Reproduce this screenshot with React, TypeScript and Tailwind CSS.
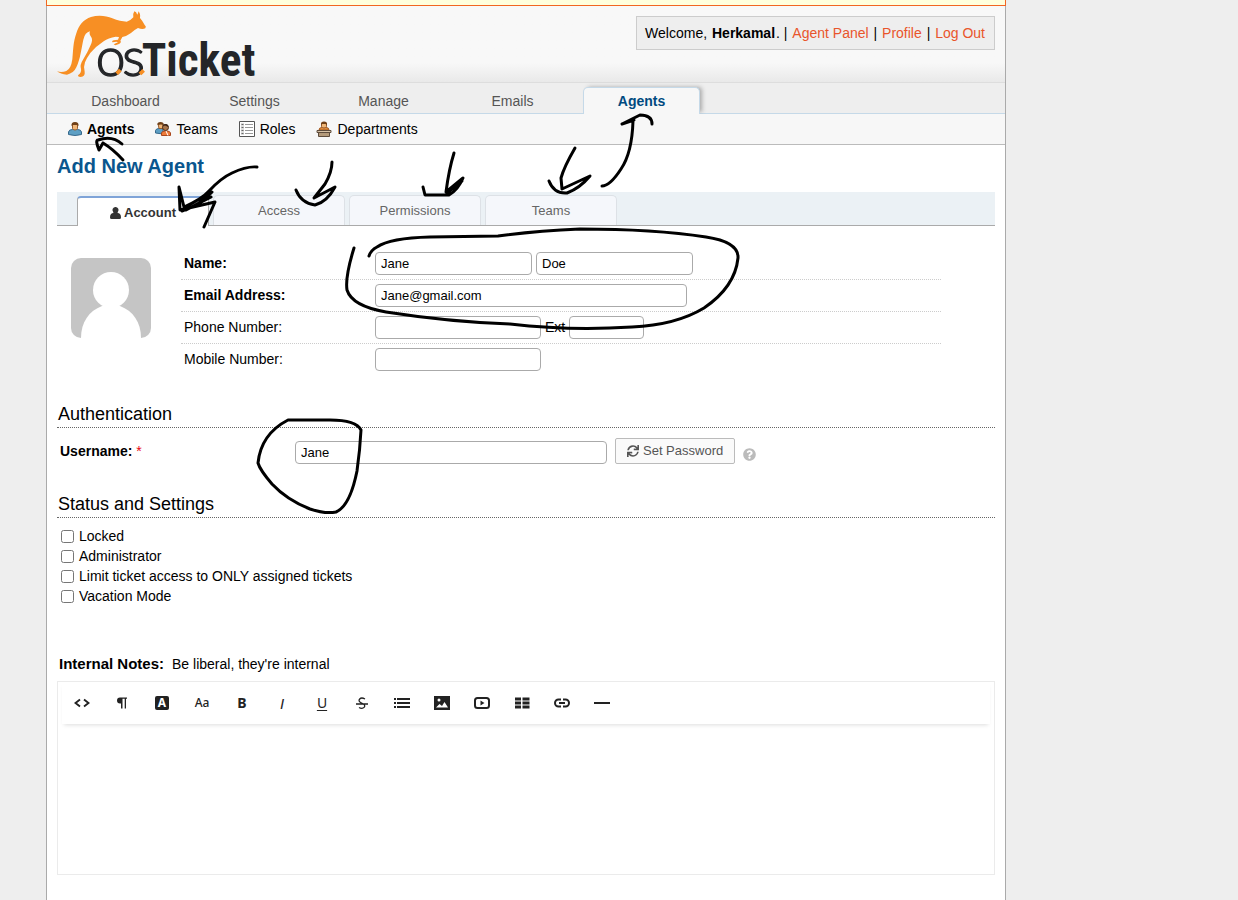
import React from "react";
import { FaSync, FaQuestionCircle } from "react-icons/fa";

function Logo() {
  return (
    <svg viewBox="45 30 600 222" className="h-[74px] w-[200px] overflow-visible" role="img" aria-label="osTicket">
      <path
        fill="#f78f24"
        d="M48 214 Q62 218 76 213 Q90 207 94 178 C97 150 96 128 106 100 C113 76 128 58 150 51 C172 44 196 47 214 55 Q238 65 257 65 Q270 61 277 52 Q275 41 280 34 Q286 35 289 44 Q293 36 292 34 Q299 40 297 54 Q305 63 311 75 Q317 79 313 85 Q304 90 291 84 Q279 90 270 99 Q258 108 244 111 L238 122 Q243 127 232 133 Q222 138 218 133 L231 127 Q229 124 214 127 Q211 123 218 121 L231 119 L234 111 L224 110 Q202 113 188 124 Q165 139 148 159 Q137 174 132 187 Q127 200 131 215 Q133 229 119 231 Q108 230 112 225 Q122 218 120 206 Q116 194 126 179 Q140 157 149 135 Q156 121 151 112 Q143 101 147 94 Q132 97 127 119 C121 146 118 177 106 202 Q98 220 78 224 Q58 223 48 214 Z"
      />
      <text x="164" y="227" fill="#242629" stroke="#242629" strokeWidth="4" fontSize="160" fontWeight="300" fontFamily="Lato, sans-serif">
        o<tspan x="244">s</tspan>
      </text>
      <text x="302" y="227" fill="#242629" fontSize="136" fontWeight="700" fontFamily="'Roboto Condensed', Lato, sans-serif">Ticket</text>
      <path d="M227 221 L238 210 M297 222 L308 211" stroke="#f78f24" strokeWidth="11" />
    </svg>
  );
}

function AgentIcon() {
  return (
    <svg viewBox="0 0 16 16" className="size-4">
      <path d="M1.500 13.500V11Q2 8.500 5.500 8.500H10.500Q14 8.500 14.500 11V13.500Q8 15.500 1.500 13.500Z" fill="#5d9fc4" stroke="#37698c" />
      <path d="M5.500 3h5v4.500Q10 9 8 9T5.500 7.500Z" fill="#f0b778" stroke="#965a2c" />
      <path d="M4.500 5Q4 1 8 1t3.500 4L10 4H6Z" fill="#704017" />
    </svg>
  );
}

function TeamsIcon() {
  return (
    <svg viewBox="0 0 16 16" className="size-4">
      <path d="M.5 12V9.500Q1 7.500 4 7.500h4V13Z" fill="#5d9fc4" stroke="#37698c" />
      <path d="M3 2.500h5v5H4Z" fill="#f0b778" stroke="#965a2c" />
      <path d="M2.500 4Q2 1 5.500 1T8.500 4L6 3.500Z" fill="#704017" />
      <path d="M6.500 14.500V12Q7 10 10 10h2q3 0 3.500 2v2.500Z" fill="#ed7b3a" stroke="#a8461d" />
      <path d="M11 10l2 4.500" stroke="#fff" />
      <circle cx="10.500" cy="6.500" r="3" fill="#a9764b" stroke="#4e2c17" />
      <path d="M7.500 5Q8 3 10.500 3t3 3L10 4.500Z" fill="#3c2416" />
    </svg>
  );
}

function RolesIcon() {
  return (
    <svg viewBox="0 0 16 16" className="size-4">
      <path d="M.5.5h15v15H.5Z" fill="#fff" stroke="#555" />
      <path d="M2 2h3v12H2Z" fill="#ddd" />
      <path d="M2.500 3.500h2M2.500 6.500h2M2.500 9.500h2M2.500 12.500h2" stroke="#666" />
      <path d="M6 3.500h8M6 6.500h8M6 9.500h8M6 12.500h8" stroke="#999" />
    </svg>
  );
}

function DepartmentsIcon() {
  return (
    <svg viewBox="0 0 16 16" className="size-4">
      <path d="M3 9Q3 6.500 6 6.500h4Q13 6.500 13 9Z" fill="#e8913e" stroke="#a0561e" />
      <path d="M5.500 2h5v3.500Q10 7 8 7T5.500 5.500Z" fill="#f0b778" stroke="#965a2c" />
      <path d="M5 4Q4.500.5 8 .5T11 4L9.500 3H6Z" fill="#704017" />
      <path d="M1 9.500h14v2H1Z" fill="#d7c3a7" stroke="#5e4c3c" />
      <path d="M2.500 11.500h11v4h-11Z" fill="#b49a7a" stroke="#5e4c3c" />
    </svg>
  );
}

const mainTabs = ["Dashboard", "Settings", "Manage", "Emails", "Agents"];

const subTabs = [
  { name: "Agents", icon: <AgentIcon />, active: true },
  { name: "Teams", icon: <TeamsIcon />, active: false },
  { name: "Roles", icon: <RolesIcon />, active: false },
  { name: "Departments", icon: <DepartmentsIcon />, active: false },
];

const options = ["Locked", "Administrator", "Limit ticket access to ONLY assigned tickets", "Vacation Mode"];

const glyph = "font-['Noto_Sans',sans-serif] text-sm leading-none";

const tools: { label: string; icon: React.ReactNode }[] = [
  { label: "HTML", icon: <svg viewBox="0 0 16 16" className="size-4"><path d="M6 4.500 1.500 8 6 11.500M10 4.500 14.500 8 10 11.500" fill="none" stroke="currentColor" strokeWidth="1.900" /></svg> },
  { label: "Format", icon: <svg viewBox="0 0 16 16" className="size-4"><path d="M7 8.500H6a3 3 0 0 1 0-6H13V3.700h-1V13.500h-1.300V3.700H8.500V13.500H7Z" fill="currentColor" /></svg> },
  { label: "Text color", icon: <span className="flex size-3.5 items-center justify-center rounded-xs bg-[#222] font-['Noto_Sans',sans-serif] text-xs leading-none font-bold text-white">A</span> },
  { label: "Font", icon: <span className="font-['Noto_Sans',sans-serif] text-xs leading-none font-medium">Aa</span> },
  { label: "Bold", icon: <span className={glyph + " font-bold"}>B</span> },
  { label: "Italic", icon: <span className="text-[15px] leading-none italic">I</span> },
  { label: "Underline", icon: <span className={glyph + " underline underline-offset-2"}>U</span> },
  { label: "Deleted", icon: <svg viewBox="0 0 16 16" className="size-4"><path d="M11 4Q7.500 2 5.700 4T7 7.700L9.500 9Q12 11 9.500 12.800 7.500 14 5 12.500M2 9h12" fill="none" stroke="currentColor" strokeWidth="1.300" /></svg> },
  { label: "Lists", icon: <svg viewBox="0 0 16 16" className="size-4"><path d="M0 4h2M3 4h13M0 8h2M3 8h13M0 12h2M3 12h13" stroke="currentColor" strokeWidth="2" /></svg> },
  { label: "Image", icon: <svg viewBox="0 0 16 16" className="size-4"><path fillRule="evenodd" d="M0 1h16v14H0ZM3.500 5a1.500 1.500 0 1 0 3 0 1.500 1.500 0 1 0-3 0M2 12.500h12L10.500 7 8 11 5.500 9Z" fill="currentColor" /></svg> },
  { label: "Video", icon: <svg viewBox="0 0 16 16" className="size-4"><rect x="1" y="3" width="14" height="10" rx="2.500" fill="none" stroke="currentColor" strokeWidth="2" /><path d="M6.500 5.500 10.500 8l-4 2.500Z" fill="currentColor" /></svg> },
  { label: "Table", icon: <svg viewBox="0 0 16 16" className="size-4"><path d="M1 4h6M8.500 4h7M1 8h6M8.500 8h7M1 12h6M8.500 12h7" stroke="currentColor" strokeWidth="3" /></svg> },
  { label: "Link", icon: <svg viewBox="0 0 16 16" className="size-4"><path d="M7 4.500H4.500a3.500 3.500 0 0 0 0 7H7M9 4.500h2.500a3.500 3.500 0 0 1 0 7H9M5 8h6" fill="none" stroke="currentColor" strokeWidth="2" /></svg> },
  { label: "Line", icon: <svg viewBox="0 0 16 16" className="size-4"><path d="M0 8h16" stroke="currentColor" strokeWidth="2" /></svg> },
];

const field = "h-[23px] rounded-[4px] border border-[#aaa] bg-white px-[5px] text-[13px]";
const row = "flex h-8 items-center border-b border-dotted border-[#ccc] pl-[3px]";

const strokes = [
  "M123 160Q113 149 103 143M99 150Q95 140 98 140Q112 135 122 144M103 143L99 150",
  "M257 167Q247 166 232 173Q221 178 209 191Q202 199 184 207L179 187L180 210L215 202L204 227M182 211Q200 205 212 192M184 208L208 194M186 210L211 197",
  "M332 162Q332 172 325 184L314 198L335 187Q327 202 315 205Q301 203 296 190",
  "M454 153Q449 169 446 192L463 178Q458 190 449 195L425 195L423 187M447 193L462 181",
  "M575 148Q564 167 561 178L562 189L590 176Q580 188 567 193Q554 194 549 181",
  "M602 186Q610 186 621 169Q632 153 633 121M622 124L640 115Q652 115 652 124M622 124L634 120",
  "M354 248Q345 277 347 290Q352 306 386 312Q450 322 510 324Q570 331 632 327Q676 325 704 308Q735 287 738 258Q739 242 706 237Q654 229 580 229Q535 231 498 236L430 237Q390 238 377 247Q371 250 369 256",
  "M288 420Q261 434 258 463Q260 470 272 484Q287 500 310 509Q325 514 336 512Q350 506 357 471Q360 450 361 430Q356 420 330 420Z",
];

export default function App() {
  return (
    <div className="relative flex min-h-screen overflow-hidden bg-[#eee] pl-[46px] font-['Liberation_Sans',Arial,sans-serif] text-sm text-black">
      <div className="w-full max-w-[960px] border-x border-[#aaa] bg-white">
        <div className="-mx-px h-[6px] border-x border-b border-[#f26522] bg-[#ffffdd]" />
        <header className="flex h-[77px] items-start justify-between border-b border-[#ddd] bg-linear-to-b from-[#f8f8f8] from-75% to-[#e9e9e9] pr-[10px] pl-2">
          <a href="#home" className="mt-1 ml-px"><Logo /></a>
          <p className="mt-[10px] border border-[#ccc] bg-[#eee] px-2 py-[6px] leading-5">
            Welcome, <strong className="mx-px">Herkamal</strong>. | <a href="#panel" className="mx-px text-[#e9552b]">Agent Panel</a> | <a href="#profile" className="mx-px text-[#e9552b]">Profile</a> | <a href="#logout" className="mx-px text-[#e9552b]">Log Out</a>
          </p>
        </header>

        <nav className="flex h-[31px] items-end gap-3 border-b border-[#c5d9e8] bg-[#eee] pl-5">
          {mainTabs.map((tab) => (
            <a
              key={tab}
              href={"#" + tab}
              className={
                tab === "Agents"
                  ? "-mb-px h-[27px] w-[117px] rounded-t-[5px] border border-b-0 border-[#c5d9e8] bg-[#f7f7f7] text-center leading-[26px] font-bold text-[#004a80] shadow-[3px_-1px_4px_-1px_#aaa]"
                  : "h-[26px] w-[117px] text-center leading-7 text-[#555]"
              }
            >
              {tab}
            </a>
          ))}
        </nav>
        <nav className="relative flex h-[31px] items-center gap-[21px] border-b border-[#bbb] bg-[#f7f7f7] pl-5">
          {subTabs.map((tab) => (
            <a key={tab.name} href={"#" + tab.name} className={tab.active ? "flex items-center gap-1 font-bold" : "flex items-center gap-[5px]"}>
              {tab.icon}
              {tab.name}
            </a>
          ))}
        </nav>

        <main className="px-[10px]">
          <h1 className="pt-[7px] text-xl leading-7 font-bold text-[#0a568e]">Add New Agent</h1>

          <div className="mt-3 flex h-[34px] items-end gap-1 border-b border-[#aaa] bg-[#ebf1f5] pl-5" role="tablist">
            <button role="tab" aria-selected="true" className="-mb-px flex h-[30px] w-[132px] items-center justify-center gap-[3px] rounded-t-[4px] border border-t-2 border-b-0 border-[#aaa] border-t-[#7fa4d8] bg-white pt-0.5 text-[13px] font-bold text-[#333]">
              <svg viewBox="0 0 11 12" className="h-3 w-[11px]" fill="currentColor">
                <path d="M5.500 0A2.900 2.900 0 0 1 8 4.500Q7.500 6 7.500 6 11 6 11 10.500 11 12 9.500 12H1.500Q0 12 0 10.500 0 6 3.500 6 3.500 6 3 4.500A2.900 2.900 0 0 1 5.500 0Z" />
              </svg>
              Account
            </button>
            {["Access", "Permissions", "Teams"].map((tab) => (
              <button key={tab} role="tab" aria-selected="false" className="h-[30px] w-[132px] rounded-t-[5px] border border-b-0 border-[#dde1e6] bg-[#f5f7fb] pt-0.5 text-[13px] text-[#666]">
                {tab}
              </button>
            ))}
          </div>

          <div className="mt-[22px] flex gap-[30px] pl-[14px]">
            <svg viewBox="0 0 80 80" className="mt-[10px] size-20" role="img" aria-label="Avatar">
              <rect width="80" height="80" rx="10" fill="#c5c5c5" />
              <circle cx="40" cy="32" r="18" fill="#fff" />
              <path d="M10 80C10 64 18 53 31 48H49C62 53 70 64 70 80Z" fill="#fff" />
            </svg>
            <div className="w-[760px]">
              <div className={row}>
                <label htmlFor="first" className="w-[191px] pb-0.5 font-bold">Name:</label>
                <input id="first" defaultValue="Jane" className={field + " w-[157px]"} />
                <input aria-label="Last name" defaultValue="Doe" className={field + " ml-1 w-[157px]"} />
              </div>
              <div className={row}>
                <label htmlFor="email" className="w-[191px] pb-0.5 font-bold">Email Address:</label>
                <input id="email" defaultValue="Jane@gmail.com" className={field + " w-[312px]"} />
              </div>
              <div className={row}>
                <label htmlFor="phone" className="w-[191px] pb-0.5">Phone Number:</label>
                <input id="phone" className={field + " w-[166px]"} />
                <label htmlFor="ext" className="mx-1 pb-0.5">Ext</label>
                <input id="ext" className={field + " w-[75px]"} />
              </div>
              <div className="flex h-8 items-center border-b border-transparent pl-[3px]">
                <label htmlFor="mobile" className="w-[191px] pb-0.5">Mobile Number:</label>
                <input id="mobile" className={field + " w-[166px]"} />
              </div>
            </div>
          </div>

          <h2 className="mt-[25px] border-b border-dotted border-[#666] pl-px text-lg leading-[26px]">Authentication</h2>
          <div className="flex h-12 items-center pl-[3px]">
            <label htmlFor="username" className="w-[235px] pb-0.5 font-bold">
              Username: <span className="font-normal text-red-600">*</span>
            </label>
            <input id="username" defaultValue="Jane" className={field + " w-[312px]"} />
            <button className="mb-0.5 ml-2 flex h-[26px] items-center gap-1 rounded-xs border border-[#bbb] bg-[#fafafa] px-[11px] text-[13px] text-[#555]">
              <FaSync className="size-3" />
              Set Password
            </button>
            <a href="#help" aria-label="Help" className="mt-1 ml-2 text-[#bbb]"><FaQuestionCircle className="size-[13px]" /></a>
          </div>

          <h2 className="mt-[15px] border-b border-dotted border-[#666] pl-px text-lg leading-[26px]">Status and Settings</h2>
          <div className="mt-2 pl-1">
            {options.map((option) => (
              <label key={option} className="flex h-5 items-center gap-[5px]">
                <input type="checkbox" className="size-[13px]" />
                {option}
              </label>
            ))}
          </div>

          <label htmlFor="notes" className="mt-12 flex items-baseline gap-2 pl-[2px] leading-5">
            <strong className="text-[15px]">Internal Notes:</strong> Be liberal, they're internal
          </label>
          <div className="mt-[7px] border border-[#ebebeb]">
            <div className="mx-1 flex h-[42px] items-center shadow-[0_3px_4px_-2px_#ddd]">
              {tools.map((tool) => (
                <button key={tool.label} aria-label={tool.label} className="flex h-10 w-10 items-center justify-center text-[#222]">
                  {tool.icon}
                </button>
              ))}
            </div>
            <textarea id="notes" className="mt-1 block h-[146px] w-full resize-none p-4 outline-none" />
          </div>
        </main>
      </div>

      <svg viewBox="0 0 1238 900" className="pointer-events-none absolute top-0 left-0 h-[900px] w-[1238px]" fill="none" stroke="#000" strokeWidth="3" strokeLinecap="round" strokeLinejoin="round">
        {strokes.map((d) => (
          <path key={d} d={d} />
        ))}
      </svg>
    </div>
  );
}
